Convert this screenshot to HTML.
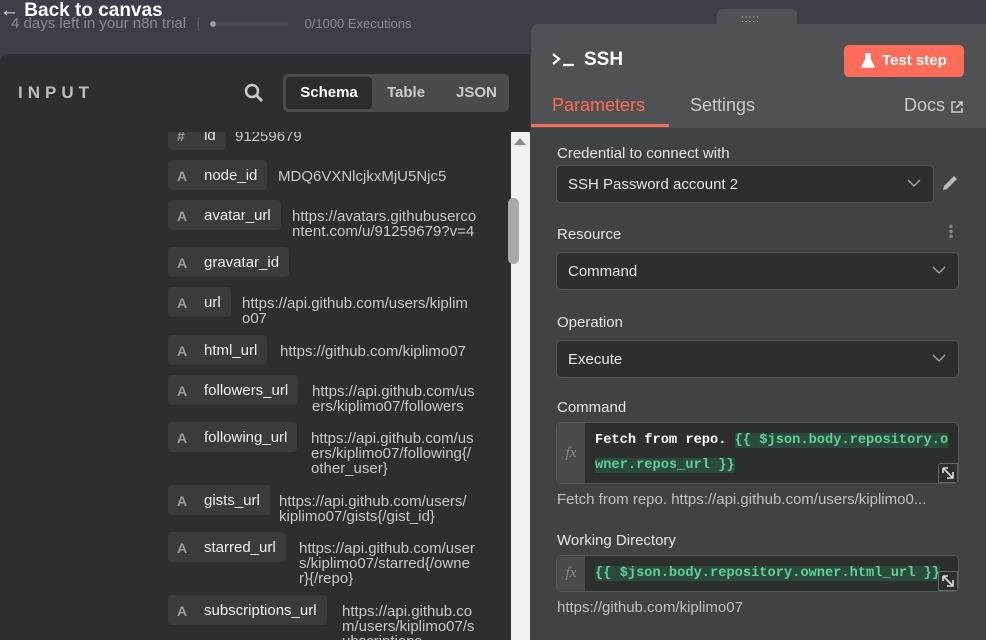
<!DOCTYPE html>
<html><head><meta charset="utf-8"><style>
*{box-sizing:border-box;margin:0;padding:0}
body{width:986px;height:640px;overflow:hidden;background:#3e3e48;font-family:"Liberation Sans",sans-serif;position:relative}
.abs{position:absolute}
.top1{left:0;top:0;color:#fff;font-size:19px;font-weight:bold;white-space:nowrap}
.top2{left:11px;top:15px;color:#8a8a92;font-size:15px;white-space:nowrap}
.left{left:0;top:54px;width:530px;height:586px;background:#2e2e2f;border-top-left-radius:8px}
.sb{left:511px;top:132px;width:19px;height:508px;background:#f1f1f1}
.pill{position:absolute;left:168px;height:30px;background:#3a3b3c;border-radius:4px;color:#f0f0f0;font-size:15px;line-height:32px;padding-left:36px;padding-right:10px;white-space:nowrap}
.pill i{position:absolute;left:9px;top:0;font-style:normal;color:#9a9aa0;font-size:14px;font-weight:bold}
.val{position:absolute;color:#c9c9c9;font-size:15px;line-height:15px;white-space:nowrap}
.rp{left:531px;top:24px;width:455px;height:616px;background:#414244;border-top-left-radius:8px;overflow:hidden}
.hdr{position:absolute;left:0;top:0;width:455px;height:104px;background:#505153}
.lab{position:absolute;left:26px;color:#e6e6e6;font-size:15px}
.sel{position:absolute;left:25px;width:403px;height:38px;background:#2d2e2e;border:1px solid #555;border-radius:5px;color:#e8e8e8;font-size:15px;line-height:38px;padding-left:11px}
.sel svg{position:absolute;right:12px;top:13px}
.code{position:absolute;left:25px;width:403px;background:#2d2e2e;border:1px solid #555;border-radius:5px;overflow:hidden}
.fx{position:absolute;left:0;top:0;bottom:0;width:28px;background:#4a4b4d;color:#888;font-style:italic;font-family:"Liberation Serif",serif;font-size:15px;text-align:center}
.mono{position:absolute;left:38px;font-family:"Liberation Mono",monospace;font-size:13.7px;color:#fff;line-height:25px;font-weight:bold}
.g{color:#5fd09a;background:#2c4a3c}
.exp{position:absolute;right:0;bottom:0;width:20px;height:20px;border:1px solid #666;background:#2d2e2e;border-radius:3px 0 0 0}
.hint{position:absolute;left:26px;color:#c0c0c0;font-size:15px;white-space:nowrap}
</style></head><body>
<div class="abs top2">4 days left in your n8n trial <span style="color:#666;margin:0 6px">|</span> <span style="display:inline-block;width:78px;height:4px;background:#4a4a54;border-radius:2px;vertical-align:middle;position:relative"><span style="position:absolute;left:0;top:-1px;width:6px;height:6px;border-radius:3px;background:#999"></span></span> <span style="font-size:13px;margin-left:12px">0/1000 Executions</span></div>
<div class="abs top1">← Back to canvas</div>

<div class="abs left"></div>
<div class="abs" style="left:18px;top:83px;color:#bdbdbd;font-size:17px;letter-spacing:5px;font-weight:bold">INPUT</div>
<svg class="abs" style="left:244px;top:83px" width="20" height="20" viewBox="0 0 20 20"><circle cx="8" cy="8" r="6" fill="none" stroke="#ccc" stroke-width="2.5"/><line x1="12.5" y1="12.5" x2="18" y2="18" stroke="#ccc" stroke-width="2.8"/></svg>
<div class="abs" style="left:283px;top:74px;width:226px;height:38px;background:#4a4b4d;border-radius:5px"></div>
<div class="abs" style="left:286px;top:77px;width:86px;height:32px;background:#2b2c2d;border-radius:4px;color:#fff;font-size:15px;font-weight:bold;line-height:32px;text-align:center">Schema</div>
<div class="abs" style="left:387px;top:84px;color:#ccc;font-size:15px;font-weight:bold">Table</div>
<div class="abs" style="left:456px;top:84px;color:#ccc;font-size:15px;font-weight:bold">JSON</div>

<div class="abs" style="left:0;top:132px;width:511px;height:508px;overflow:hidden">
<div style="position:relative;top:-132px">
<div class="pill" style="top:120px"><i>#</i>id</div><div class="val" style="left:235px;top:129px">91259679</div>
<div class="pill" style="top:160px"><i>A</i>node_id</div><div class="val" style="left:278px;top:169px">MDQ6VXNlcjkxMjU5Njc5</div>
<div class="pill" style="top:200px"><i>A</i>avatar_url</div><div class="val" style="left:292px;top:209px">https://avatars.githubuserco<br>ntent.com/u/91259679?v=4</div>
<div class="pill" style="top:247px"><i>A</i>gravatar_id</div>
<div class="pill" style="top:287px"><i>A</i>url</div><div class="val" style="left:242px;top:296px">https://api.github.com/users/kiplim<br>o07</div>
<div class="pill" style="top:335px"><i>A</i>html_url</div><div class="val" style="left:280px;top:344px">https://github.com/kiplimo07</div>
<div class="pill" style="top:375px"><i>A</i>followers_url</div><div class="val" style="left:312px;top:384px">https://api.github.com/us<br>ers/kiplimo07/followers</div>
<div class="pill" style="top:422px"><i>A</i>following_url</div><div class="val" style="left:311px;top:431px">https://api.github.com/us<br>ers/kiplimo07/following{/<br>other_user}</div>
<div class="pill" style="top:485px"><i>A</i>gists_url</div><div class="val" style="left:279px;top:494px">https://api.github.com/users/<br>kiplimo07/gists{/gist_id}</div>
<div class="pill" style="top:532px"><i>A</i>starred_url</div><div class="val" style="left:299px;top:541px">https://api.github.com/user<br>s/kiplimo07/starred{/owne<br>r}{/repo}</div>
<div class="pill" style="top:595px"><i>A</i>subscriptions_url</div><div class="val" style="left:342px;top:604px">https://api.github.co<br>m/users/kiplimo07/s<br>ubscriptions</div>
</div></div>
<div class="abs sb"></div>
<div class="abs" style="left:514px;top:138px;width:0;height:0;border-left:6px solid transparent;border-right:6px solid transparent;border-bottom:7px solid #888"></div>
<div class="abs" style="left:508px;top:198px;width:11px;height:66px;background:#a8a8a8;border-radius:5px"></div>

<div class="abs" style="left:717px;top:9px;width:80px;height:20px;background:#505153;border-radius:6px 6px 0 0"></div>
<div class="abs" style="left:741px;top:17px;color:#ccc;font-size:10px;letter-spacing:1px;line-height:5px">:::::</div>
<div class="abs rp">
<div class="hdr"></div>
<div class="abs" style="left:0;top:100px;width:138px;height:3px;background:#ff6d5a"></div>
<svg class="abs" style="left:20px;top:29px" width="26" height="14" viewBox="0 0 26 14"><polyline points="2,1 8,6 2,11" fill="none" stroke="#fff" stroke-width="2.2"/><line x1="12" y1="12" x2="23" y2="12" stroke="#fff" stroke-width="2.2"/></svg>
<div class="abs" style="left:53px;top:25px;color:#fff;font-size:19px;font-weight:bold">SSH</div>
<div class="abs" style="left:313px;top:21px;width:120px;height:32px;background:#ff6d5a;border-radius:5px;color:#fff;font-size:15px;font-weight:bold;line-height:32px;padding-left:38px">Test step</div>
<svg class="abs" style="left:330px;top:29px" width="14" height="16" viewBox="0 0 14 16"><path d="M4 1h6M5 1v5L1 14h12L9 6V1" fill="#fff" stroke="#fff" stroke-width="1.5"/></svg>
<div class="abs" style="left:21px;top:71px;color:#ff6d5a;font-size:18px">Parameters</div>
<div class="abs" style="left:159px;top:71px;color:#c8c8d0;font-size:18px">Settings</div>
<div class="abs" style="left:373px;top:71px;color:#c8c8d0;font-size:18px">Docs</div>
<svg class="abs" style="left:419px;top:76px" width="14" height="14" viewBox="0 0 14 14"><path d="M6 2H2v10h10V8M8 2h4v4M12 2L6 8" fill="none" stroke="#c8c8d0" stroke-width="1.6"/></svg>

<div class="lab" style="top:121px">Credential to connect with</div>
<div class="sel" style="top:141px;width:378px">SSH Password account 2<svg width="14" height="8"><polyline points="1,1 7,7 13,1" fill="none" stroke="#aaa" stroke-width="1.3"/></svg></div>
<svg class="abs" style="left:410px;top:150px" width="18" height="18" viewBox="0 0 18 18"><path d="M2 16l1-4L13 2l3 3L6 15z" fill="#bbb"/></svg>
<div class="lab" style="top:202px">Resource</div>
<div class="abs" style="left:418px;top:200px;width:4px;height:14px;background:radial-gradient(circle,#888 1.5px,transparent 2px) 0 0/4px 5px"></div>
<div class="sel" style="top:228px">Command<svg width="14" height="8"><polyline points="1,1 7,7 13,1" fill="none" stroke="#aaa" stroke-width="1.3"/></svg></div>
<div class="lab" style="top:290px">Operation</div>
<div class="sel" style="top:316px">Execute<svg width="14" height="8"><polyline points="1,1 7,7 13,1" fill="none" stroke="#aaa" stroke-width="1.3"/></svg></div>
<div class="lab" style="top:375px">Command</div>
<div class="code" style="top:398px;height:62px"><div class="fx" style="line-height:60px">fx</div><div class="mono" style="top:5px">Fetch from repo. <span class="g">{{ $json.body.repository.o</span><br><span class="g">wner.repos_url }}</span></div><div class="exp"><svg width="18" height="18" viewBox="0 0 18 18"><path d="M4 4l10 10M14 8v6H8M4 4v5M4 4h5" fill="none" stroke="#ddd" stroke-width="1.6"/></svg></div></div>
<div class="hint" style="top:467px">Fetch from repo. https://api.github.com/users/kiplimo0...</div>
<div class="lab" style="top:508px">Working Directory</div>
<div class="code" style="top:531px;height:37px"><div class="fx" style="line-height:35px">fx</div><div class="mono" style="top:5px"><span class="g">{{ $json.body.repository.owner.html_url }}</span></div><div class="exp"><svg width="18" height="18" viewBox="0 0 18 18"><path d="M4 4l10 10M14 8v6H8M4 4v5M4 4h5" fill="none" stroke="#ddd" stroke-width="1.6"/></svg></div></div>
<div class="hint" style="top:575px">https://github.com/kiplimo07</div>
</div>
</body></html>
